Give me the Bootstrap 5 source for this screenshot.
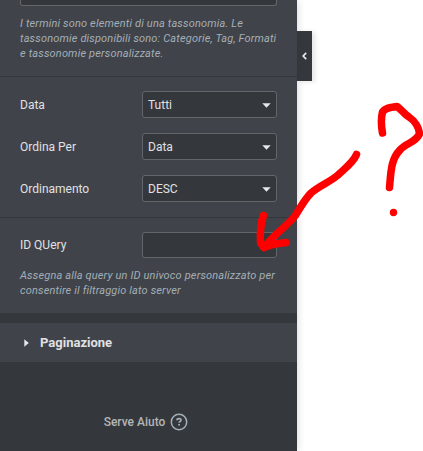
<!DOCTYPE html>
<html lang="it">
<head>
<meta charset="utf-8">
<meta name="viewport" content="width=device-width, initial-scale=1">
<title>Query</title>
<link href="https://cdn.jsdelivr.net/npm/bootstrap@5.3.0/dist/css/bootstrap.min.css" rel="stylesheet">
<style>
body{font-family:Roboto,sans-serif;font-size:12px;line-height:15px;background:#fff;color:#e0e1e3;height:451px;overflow:hidden}
.side-panel{width:297px;height:451px;background:#34383c;box-shadow:0 0 8px rgba(0,0,0,.18)}
.controls{background:#404349;height:313px}
.control-group{padding:14px 20px 15px;gap:15px;border-top:1px solid #34383c}
.control-group.first{border:0;padding-top:0;height:76px;gap:10px}
.control-group.query{gap:10px}
.control-row{height:27px}
.control-row>span,.field>span{padding-top:2px}
.field{width:135px;height:27px;background:#34383c;border:1px solid #64666a;border-radius:3px;padding:0 5px;color:#e0e1e3}
.field svg{margin-top:1px}
.query .control-row{height:26px}
input.field{height:26px;outline:0}
.field-cut{height:6px;background:#34383c;border:1px solid #64666a;border-top:0;border-radius:0 0 3px 3px}
.hint{font-size:11px;font-style:italic;letter-spacing:.155px;color:#a4afb7;white-space:nowrap}
.section-head{margin-top:10px;height:39px;background:#404349;padding-left:24px;font-size:13px;gap:11px}
.help{margin-top:51px;height:18px;gap:5px;padding-right:5px;font-weight:500;color:#a4afb7}
.help span{color:#b4b5b7}
.toggle{width:15px;height:50px;margin-top:31px;background:#34383c;box-shadow:3px 1px 5px rgba(0,0,0,.1)}
.ink{left:0;top:0;pointer-events:none}
</style>
<script src="https://cdn.jsdelivr.net/npm/bootstrap@5.3.0/dist/js/bootstrap.bundle.min.js"></script>
</head>
<body class="position-relative">
<div class="d-flex align-items-start">
<aside class="side-panel flex-shrink-0">
  <div class="controls">
    <div class="control-group first d-flex flex-column">
      <div class="field-cut"></div>
      <div class="hint">I termini sono elementi di una tassonomia. Le<br>tassonomie disponibili sono: Categorie, Tag, Formati<br>e tassonomie personalizzate.</div>
    </div>
    <div class="control-group d-flex flex-column">
      <div class="control-row d-flex align-items-center justify-content-between"><span>Data</span>
        <div class="field d-flex align-items-center justify-content-between" role="button"><span>Tutti</span><svg width="9" height="5" viewBox="0 0 9 5"><path d="M.3.3h8.4L4.5 4.7z" fill="#e6e8ea"/></svg></div></div>
      <div class="control-row d-flex align-items-center justify-content-between"><span>Ordina Per</span>
        <div class="field d-flex align-items-center justify-content-between" role="button"><span>Data</span><svg width="9" height="5" viewBox="0 0 9 5"><path d="M.3.3h8.4L4.5 4.7z" fill="#e6e8ea"/></svg></div></div>
      <div class="control-row d-flex align-items-center justify-content-between"><span>Ordinamento</span>
        <div class="field d-flex align-items-center justify-content-between" role="button"><span>DESC</span><svg width="9" height="5" viewBox="0 0 9 5"><path d="M.3.3h8.4L4.5 4.7z" fill="#e6e8ea"/></svg></div></div>
    </div>
    <div class="control-group query d-flex flex-column">
      <div class="control-row d-flex align-items-center justify-content-between"><label for="qid">ID QUery</label><input id="qid" class="field" type="text"></div>
      <div class="hint">Assegna alla query un ID univoco personalizzato per<br>consentire il filtraggio lato server</div>
    </div>
  </div>
  <div class="section-head d-flex align-items-center fw-bold" role="button">
    <svg width="5" height="8" viewBox="0 0 5 8"><path d="M.3.3v7.4L4.8 4z" fill="#e6e8ea"/></svg><span>Paginazione</span>
  </div>
  <div class="help d-flex align-items-center justify-content-center"><span>Serve Aiuto</span>
    <svg width="18" height="18" viewBox="0 0 18 18" fill="none" stroke="#a4afb7"><circle cx="9" cy="9" r="7.7" stroke-width="1.5"/><path d="M6.9 7.3C7 6 8 5.6 9 5.6c1.2 0 2 .6 2 1.6 0 1.3-1.9 1.3-1.9 2.6" stroke-width="1.6"/><path d="M9.1 10.900v1.700" stroke-width="1.800"/></svg>
  </div>
</aside>
<div class="toggle d-flex align-items-center justify-content-center flex-shrink-0" role="button">
  <svg width="5" height="8" viewBox="0 0 5 8"><path d="M4.200.8L1.200 4l3 3.200" fill="none" stroke="#e6e8ea" stroke-width="1.700"/></svg>
</div>
</div>
<!-- freehand arrow and question mark over the page -->
<svg class="ink position-absolute" width="423" height="451" viewBox="0 0 423 451" fill="none" stroke="#f00" stroke-width="7.5" stroke-linecap="round" stroke-linejoin="round">
<path d="M356.500 154.500C353 163 344 169 338 175C330 182 319 186 311 193C305 199 300 208 295 216C286 227 273 235 264 247.500"/>
<path d="M263.500 215.500C260 224 260 233 260.500 243L264 247.500C271 244 279 243.500 286 242.500"/>
<path d="M382.500 133C381 125 381 118 382.500 112C386 107 391 107.500 397 106.500C401 109 404 114 409 117C415 121 419 128 419.500 134C415 143 406 143 400 150C391 159 391 171 389.500 187.500"/>
<circle cx="393.500" cy="212.500" r="3.700" fill="#f00" stroke="none"/>
</svg>
</body>
</html>
